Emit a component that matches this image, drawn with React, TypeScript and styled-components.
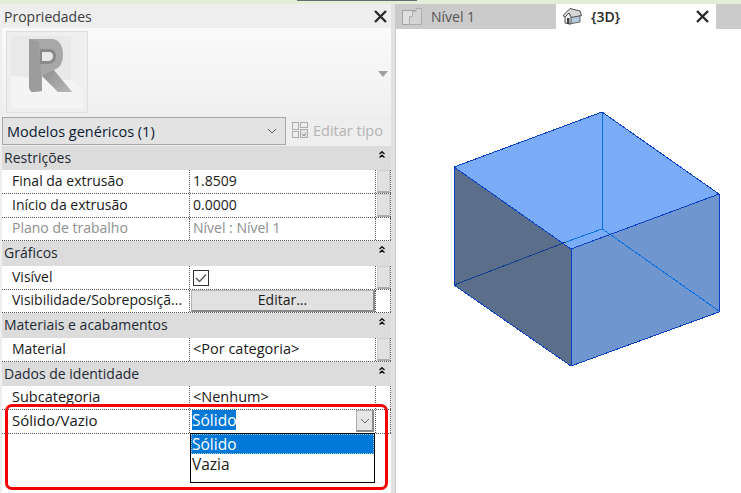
import React from "react";
import styled, { createGlobalStyle } from "styled-components";

const Global = createGlobalStyle`
  html, body { margin: 0; padding: 0; background: #fff; }
  #root { width: 741px; height: 493px; overflow: hidden; }
  * { box-sizing: border-box; }
`;

const Page = styled.div`
  width: 741px;
  height: 493px;
  display: flex;
  flex-direction: column;
  overflow: hidden;
  font-family: "Open Sans", "Noto Sans", sans-serif;
  font-size: 14px;
  color: #1a1a1a;
`;
const TopStrip = styled.div`
  height: 4px;
  flex: none;
  background: #e3efd9;
  display: flex;
`;
const TopDark = styled.div`
  margin-left: 297px;
  width: 120px;
  height: 1px;
  background: #6b6b6b;
`;
const Main = styled.div`
  flex: 1;
  display: flex;
  min-height: 0;
`;
const Panel = styled.div`
  position: relative;
  width: 391px;
  flex: none;
  background: #eeeeee;
  display: flex;
  flex-direction: column;
`;
const Gutter = styled.div`
  width: 5px;
  flex: none;
  background: #e3e3e3;
  border-right: 1px solid #c8c8c8;
`;
const TitleBar = styled.div`
  height: 24px;
  flex: none;
  display: flex;
  align-items: center;
  justify-content: space-between;
  padding: 0 4px 0 4px;
  font-size: 14px;
  color: #3c3c3c;
`;
const Preview = styled.div`
  height: 88px;
  flex: none;
  margin-left: 2px;
  display: flex;
  align-items: center;
  justify-content: space-between;
  padding: 0 3px 0 4px;
  background: linear-gradient(#fafafa, #f0f0f0);
`;
const LogoFrame = styled.div`
  width: 82px;
  height: 82px;
  border: 1px solid #dedede;
  background: #efefef;
  display: flex;
`;
const PreviewCaret = styled.div`
  width: 0;
  height: 0;
  margin-top: 4px;
  border-left: 5px solid transparent;
  border-right: 5px solid transparent;
  border-top: 6px solid #a0a0a0;
`;
const TypeRow = styled.div`
  height: 30px;
  flex: none;
  display: flex;
  align-items: center;
  padding: 0 0 0 2px;
`;
const TypeSelect = styled.div`
  width: 284px;
  height: 28px;
  display: flex;
  align-items: center;
  justify-content: space-between;
  padding: 0 8px 0 4px;
  background: #e3e3e3;
  border: 1px solid #a6a6a6;
  color: #0c1c33;
  font-size: 14.5px;
`;
const EditType = styled.div`
  display: flex;
  align-items: center;
  gap: 5px;
  margin: 0 0 2px 6px;
  color: #b4b4b4;
  font-size: 14.5px;
`;
const Grid = styled.div`
  flex: 1;
  margin-left: 2px;
  background: #fff;
  display: flex;
  flex-direction: column;
  min-height: 0;
`;
const Section = styled.div`
  height: ${(p) => p.$h ?? 24}px;
  flex: none;
  display: flex;
  align-items: center;
  justify-content: space-between;
  padding: 0 6px 0 2px;
  background: #dcdcdc;
  color: #1e2a33;
`;
const SectionTitle = styled.span`
  margin-bottom: 2px;
`;
const ChevronWrap = styled.span`
  display: flex;
  margin-bottom: 8px;
`;
const Row = styled.div`
  height: ${(p) => p.$h ?? 24}px;
  flex: none;
  display: grid;
  grid-template-columns: 188px 186px 15px;
  border-bottom: 1px dotted #555;
  position: relative;
`;
const Label = styled.div`
  padding: 0 0 3px 10px;
  display: flex;
  align-items: center;
  white-space: nowrap;
  overflow: hidden;
  font-size: ${(p) => p.$size ?? 14}px;
  color: ${(p) => (p.$muted ? "#8f8f8f" : "#1a1a1a")};
  border-right: 1px dotted #555;
`;
const Value = styled.div`
  padding-left: 2px;
  display: flex;
  align-items: center;
  justify-content: space-between;
  white-space: nowrap;
  color: ${(p) => (p.$muted ? "#8f8f8f" : "#1a1a1a")};
  border-right: 1px dotted #555;
`;
const ValueText = styled.span`
  margin: 0 0 3px 1px;
  font-size: ${(p) => p.$size ?? 14}px;
`;
const Side = styled.div`
  border-right: 1px dotted #555;
  padding: 0 0 0 1px;
  display: flex;
`;
const SideButton = styled.div`
  flex: 1;
  background: #e1e1e1;
  border: 1px solid #cfcfcf;
  border-bottom: 2px solid #a9a9a9;
`;
const CheckBox = styled.div`
  width: 16px;
  height: 16px;
  margin-left: 1px;
  border: 1px solid #333;
  background: #fff;
  display: flex;
  align-items: center;
  justify-content: center;
`;
const EditButton = styled.div`
  flex: 1;
  height: 22px;
  margin-left: -1px;
  background: #e1e1e1;
  border: 1px solid #b5b5b5;
  border-bottom: 2px solid #8a8a8a;
  border-right: 2px solid #8a8a8a;
  text-align: center;
  line-height: 18px;
`;
const Selected = styled.span`
  align-self: flex-start;
  background: #0078d7;
  color: #fff;
  font-size: 15.5px;
  line-height: 20px;
  height: 20px;
  display: block;
`;
const ComboButton = styled.div`
  align-self: flex-start;
  width: 18px;
  height: 22px;
  margin-right: 1px;
  background: #e6e6e6;
  border: 1px solid #adadad;
  border-bottom: 2px solid #8a8a8a;
  border-right: 2px solid #8a8a8a;
  display: flex;
  align-items: center;
  justify-content: center;
`;
const DropList = styled.div`
  position: absolute;
  left: 188px;
  top: 23px;
  width: 185px;
  height: 50px;
  background: #fff;
  border: 1px solid #000;
  color: #1a1a1a;
`;
const DropItem = styled.div`
  height: 20px;
  line-height: 20px;
  padding-left: 1px;
  font-size: 15.5px;
  background: ${(p) => (p.$active ? "#0078d7" : "transparent")};
  color: ${(p) => (p.$active ? "#fff" : "#1a1a1a")};
  outline: ${(p) => (p.$active ? "1px dotted #9cc8ee" : "none")};
  outline-offset: -1px;
`;
const RedMark = styled.div`
  position: absolute;
  left: 5px;
  top: 400px;
  width: 383px;
  height: 86px;
  border: 3px solid #f40000;
  border-radius: 7px;
  pointer-events: none;
`;
const View = styled.div`
  flex: 1;
  display: flex;
  flex-direction: column;
  min-width: 0;
`;
const TabBar = styled.div`
  height: 25px;
  flex: none;
  background: #cbcbcb;
  display: flex;
`;
const Tab = styled.div`
  width: 160px;
  display: flex;
  align-items: center;
  gap: 9px;
  padding: 0 7px 0 6px;
  background: ${(p) => (p.$active ? "#fff" : "transparent")};
  color: ${(p) => (p.$active ? "#2a2a2a" : "#555")};
  font-weight: ${(p) => (p.$active ? 600 : 400)};
  font-size: 14px;
`;
const TabName = styled.span`
  flex: 1;
  margin-bottom: 1px;
`;
const Canvas = styled.div`
  flex: 1;
  background: #fff;
  display: flex;
  min-height: 0;
`;
const CubeSvg = styled.svg`
  display: block;
  flex: none;
`;

const CloseIcon = ({ size = 13 }: { size?: number }) => (
  <svg width={size} height={size} viewBox="0 0 13 13">
    <path d="M1 1 L12 12 M12 1 L1 12" stroke="#2b2b2b" strokeWidth="2.4" fill="none" />
  </svg>
);
const Chevrons = () => (
  <ChevronWrap>
    <svg width="6" height="7" viewBox="0 0 6 7">
      <path d="M0.5 3 L3 0.7 L5.5 3 M0.5 6.5 L3 4.2 L5.5 6.5" stroke="#111" strokeWidth="1.3" fill="none" />
    </svg>
  </ChevronWrap>
);
const ChevronDown = ({ color = "#555" }: { color?: string }) => (
  <svg width="10" height="6" viewBox="0 0 10 6">
    <path d="M1 1 L5 5 L9 1" stroke={color} strokeWidth="1" fill="none" />
  </svg>
);
const RLogo = () => (
  <svg width="80" height="80" viewBox="0 0 80 80">
    <defs>
      <linearGradient id="rleg" x1="0" y1="0" x2="1" y2="1">
        <stop offset="0" stopColor="#8f8f8f" />
        <stop offset="1" stopColor="#b8b8b8" />
      </linearGradient>
      <filter id="soft"><feGaussianBlur stdDeviation="0.7" /></filter>
    </defs>
    <path d="M4 4 H64 V48 L4 44 Z" fill="#e9e9e9" />
    <path d="M4 44 L64 48 L76 56 V76 H4 Z" fill="#f4f4f4" />
    <g filter="url(#soft)">
      <path d="M22 7 H46 Q56 9 56 23 Q56 35 47 38 L65 60 H51 L38 43 L35 44 L35 59 L25 60 Q22 58 22 54 Z" fill="#a8a8a8" />
      <path d="M22 7 L32 10 L35 59 L25 60 Q22 58 22 54 Z" fill="#9c9c9c" />
      <path d="M35 44 L46 38 L65 60 L51 60 Z" fill="url(#rleg)" />
      <path d="M33 17 H44 Q49 19 49 24 Q49 31 42 32 H33 Z" fill="#8a8a8a" />
      <path d="M35 20 H43 Q46 21 46 24 Q46 28 42 29 H35 Z" fill="#e9e9e9" />
    </g>
  </svg>
);
const TypeIcon = () => (
  <svg width="16" height="16" viewBox="0 0 16 16" fill="none" stroke="#adadad">
    <rect x="0.5" y="0.5" width="6" height="7" />
    <rect x="8.5" y="0.5" width="7" height="5" />
    <rect x="0.5" y="9.5" width="6" height="6" />
    <rect x="8.5" y="7.5" width="7" height="8" fill="#e2e2e2" />
    <path d="M10 12 L12 14 L14 11" stroke="#8a8a8a" />
  </svg>
);
const PlanIcon = () => (
  <svg width="20" height="17" viewBox="0 0 20 17">
    <rect x="0.5" y="2.5" width="12" height="14" fill="#dfdfdf" stroke="#a2a2a2" />
    <path d="M7.5 16.5 V8.5 H10.5 V3.5 H14 V0.5 H19.5 V16.5 Z" fill="#d4d4d4" stroke="#adadad" />
  </svg>
);
const HouseIcon = () => (
  <svg width="20" height="17" viewBox="0 0 20 17">
    <path d="M4 8 L18 7 L18 14 L7 16 L4 15 Z" fill="#b4c8de" stroke="#666" />
    <path d="M1 7.5 L8 0.5 L18 3 L19.5 7.5 L9 9.5 L7 5 L3 9 Z" fill="#d6d6d6" stroke="#4c4c4c" />
    <path d="M3 9 L7 5 L9 9 L9 16 L3 15 Z" fill="#efefef" stroke="#555" />
    <rect x="5" y="10" width="2.5" height="6" fill="#444" />
  </svg>
);
const Cube = () => (
  <CubeSvg width="345" height="464" viewBox="396 29 345 464">
    <polygon points="454,167 602,112 719,194 571,249" fill="#7aacfa" />
    <polygon points="454,167 571,249 571,366 454,285" fill="#5c6f8a" />
    <polygon points="571,249 719,194 719,312 571,366" fill="#7096d0" />
    <g fill="none" strokeWidth="1" shapeRendering="crispEdges">
      <path d="M602.5 112 V229 L719 311" stroke="#0a6fe0" />
      <path d="M602 229 L566 242" stroke="#0a6fe0" />
      <path d="M566 242 L454 285" stroke="#12408f" />
      <path d="M454 167 L602 112 L719 194 V312 L571 366 L454 285 V167 L571 249 L719 194 M571 249 V366" stroke="#0b3fc4" />
    </g>
  </CubeSvg>
);

const PropertyRow = ({ label, value, muted, button, h, size, labelSize }: { label: string; value: string; muted?: boolean; button?: boolean; h?: number; size?: number; labelSize?: number }) => (
  <Row $h={h}>
    <Label $muted={muted} $size={labelSize}>{label}</Label>
    <Value $muted={muted}><ValueText $size={size}>{value}</ValueText></Value>
    <Side>{button && <SideButton />}</Side>
  </Row>
);
const SectionHead = ({ title, h }: { title: string; h?: number }) => (
  <Section $h={h}>
    <SectionTitle>{title}</SectionTitle>
    <Chevrons />
  </Section>
);

export default function App() {
  return (
    <Page>
      <Global />
      <TopStrip><TopDark /></TopStrip>
      <Main>
        <Panel>
          <TitleBar>
            <span>Propriedades</span>
            <CloseIcon />
          </TitleBar>
          <Preview>
            <LogoFrame><RLogo /></LogoFrame>
            <PreviewCaret />
          </Preview>
          <TypeRow>
            <TypeSelect>
              <span>Modelos genéricos (1)</span>
              <ChevronDown />
            </TypeSelect>
            <EditType>
              <TypeIcon />
              <span>Editar tipo</span>
            </EditType>
          </TypeRow>
          <Grid>
            <SectionHead title="Restrições" />
            <PropertyRow label="Final da extrusão" value="1.8509" button />
            <PropertyRow label="Início da extrusão" value="0.0000" button />
            <PropertyRow label="Plano de trabalho" value="Nível : Nível 1" muted h={23} />
            <SectionHead title="Gráficos" h={25} />
            <Row>
              <Label>Visível</Label>
              <Value>
                <CheckBox>
                  <svg width="12" height="10" viewBox="0 0 12 10">
                    <path d="M1 5 L4.5 8.5 L11 1.5" stroke="#555" strokeWidth="1.3" fill="none" />
                  </svg>
                </CheckBox>
              </Value>
              <Side><SideButton /></Side>
            </Row>
            <Row $h={23}>
              <Label>Visibilidade/Sobreposiçã...</Label>
              <Value><EditButton>Editar...</EditButton></Value>
              <Side />
            </Row>
            <SectionHead title="Materiais e acabamentos" h={25} />
            <PropertyRow label="Material" value="<Por categoria>" button size={14.5} />
            <SectionHead title="Dados de identidade" />
            <PropertyRow label="Subcategoria" value="<Nenhum>" size={14.5} labelSize={14.5} />
            <Row>
              <Label $size={15}>Sólido/Vazio</Label>
              <Value>
                <Selected>Sólido</Selected>
                <ComboButton><ChevronDown color="#666" /></ComboButton>
              </Value>
              <Side />
              <DropList>
                <DropItem $active>Sólido</DropItem>
                <DropItem>Vazia</DropItem>
              </DropList>
            </Row>
          </Grid>
          <RedMark />
        </Panel>
        <Gutter />
        <View>
          <TabBar>
            <Tab>
              <PlanIcon />
              <TabName>Nível 1</TabName>
            </Tab>
            <Tab $active>
              <HouseIcon />
              <TabName>{"{3D}"}</TabName>
              <CloseIcon />
            </Tab>
          </TabBar>
          <Canvas><Cube /></Canvas>
        </View>
      </Main>
    </Page>
  );
}
